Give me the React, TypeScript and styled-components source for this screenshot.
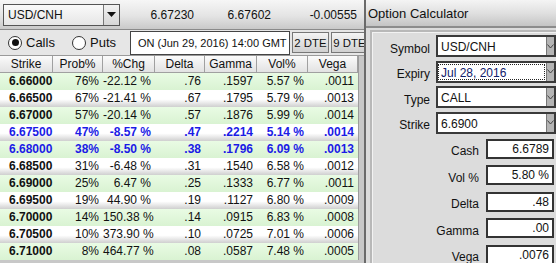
import React from 'react';
import styled, {createGlobalStyle} from "styled-components";

const GlobalStyle = createGlobalStyle`
    body {
        margin: 0;
        font-family: 'Liberation Sans', Arial, sans-serif;
        background: #d4d4d4;
    }
`;

const Screen = styled.div`
    display: flex;
    width: 556px;
    height: 263px;
    overflow: hidden;
    font-size: 12px;
    color: #111;
`;

const LeftPanel = styled.div`
    display: flex;
    flex-direction: column;
    width: 364px;
    flex-shrink: 0;
    background: #c8c8c8;
    overflow: hidden;
`;

const TopBar = styled.div`
    display: grid;
    grid-template-columns: 117px 74px 77px 86px;
    align-items: center;
    height: 30px;
    box-sizing: border-box;
    padding-left: 3px;
    background: linear-gradient(#f6f6f6, #e4e4e4 55%, #c9c9c9);
    border-bottom: 1px solid #8a8a8a;
`;

const Combo = styled.div`
    display: flex;
    height: 22px;
    box-sizing: border-box;
    border: 1px solid #555;
    background: linear-gradient(#fafafa, #e6e6e6);
    font-size: 12px;
`;

const ComboText = styled.span`
    flex: 1;
    padding: 3px 0 0 4px;
`;

const ComboButton = styled.span`
    display: flex;
    align-items: center;
    justify-content: center;
    width: 15px;
    border-left: 1px solid #777;
    background: linear-gradient(#f2f2f2, #d6d6d6);
`;

const Quote = styled.span`
    text-align: right;
    font-size: 12px;
`;

const ControlRow = styled.div`
    display: flex;
    align-items: center;
    height: 26px;
    padding-left: 8px;
    background: #e6e6e6;
    border-bottom: 1px solid #9a9a9a;
    box-sizing: border-box;
    overflow: hidden;
`;

const RadioLabel = styled.label<{ $width: number }>`
    display: flex;
    align-items: center;
    gap: 4px;
    flex-shrink: 0;
    width: ${p => p.$width}px;
    font-size: 13px;
`;

const RadioDot = styled.span<{ $on: boolean }>`
    position: relative;
    width: 12px;
    height: 12px;
    border-radius: 50%;
    border: 1px solid #333;
    background: #fff;

    &::after {
        content: '';
        display: ${p => p.$on ? 'block' : 'none'};
        position: absolute;
        left: 2.5px;
        top: 2.5px;
        width: 7px;
        height: 7px;
        border-radius: 50%;
        background: #111;
    }
`;

const ExpiryBox = styled.div`
    display: flex;
    align-items: center;
    flex-shrink: 0;
    width: 160px;
    height: 24px;
    box-sizing: border-box;
    padding-left: 7px;
    background: #fff;
    border: 1px solid #444;
    font-size: 11px;
    white-space: nowrap;
`;

const DteButton = styled.button`
    flex-shrink: 0;
    width: 37px;
    height: 21px;
    padding: 0;
    margin-left: 2px;
    font-family: inherit;
    font-size: 11.4px;
    color: #111;
    white-space: nowrap;
    background: linear-gradient(#f4f4f4, #d0d0d0);
    border: 1px solid #777;
    border-radius: 0;
`;

const TableArea = styled.div`
    display: flex;
`;

const Grid = styled.div`
    display: grid;
    grid-template-columns: 53px 50px 52px 50px 52px 51px 50px;
    flex-shrink: 0;
    border-right: 1px solid #9c9c9c;
`;

const HeadCell = styled.div`
    height: 17px;
    line-height: 17px;
    text-align: center;
    font-size: 12px;
    background: linear-gradient(#fbfbfb, #e2e2e2);
    border-right: 1px solid #a0a0a0;
    border-bottom: 1px solid #a0a0a0;
    box-sizing: border-box;
`;

const Cell = styled.div<{ $odd: boolean; $blue: boolean; $strike?: boolean }>`
    height: 17px;
    line-height: 17px;
    padding: 0 ${p => p.$strike ? '0 0 9px' : '4px 0 0'};
    text-align: ${p => p.$strike ? 'left' : 'right'};
    font-size: 12px;
    font-weight: ${p => (p.$strike || p.$blue) ? 700 : 400};
    color: ${p => p.$blue ? '#1b1be6' : '#111'};
    white-space: nowrap;
    background: ${p => p.$odd
            ? 'linear-gradient(#e9fbe4, #d9f3d2)'
            : 'linear-gradient(#ffffff 55%, #cfcfcf)'};
`;

const Divider = styled.div`
    width: 2px;
    flex-shrink: 0;
    background: #6a6a6a;
`;

const RightPanel = styled.div`
    display: flex;
    flex-direction: column;
    flex: 1;
    background: #dcdcdc;
`;

const TitleBar = styled.div`
    height: 28px;
    line-height: 28px;
    padding-left: 2px;
    font-size: 13px;
    white-space: nowrap;
    background: linear-gradient(#f4f4f4, #e0e0e0 50%, #c4c4c4);
    border-bottom: 2px solid #8c8c8c;
    box-sizing: border-box;
`;

const InnerBox = styled.div`
    flex: 1;
    margin: 2px 0 0 4px;
    padding: 3px 0 0 0;
    border-left: 2px solid #b8b8b8;
    border-top: 2px solid #b8b8b8;
    box-shadow: inset 1px 1px 0 #f2f2f2;
`;

const SelectForm = styled.div`
    display: grid;
    grid-template-columns: 58px 1fr;
    column-gap: 6px;
    row-gap: 3.5px;
    align-items: center;
`;

const FieldLabel = styled.span`
    text-align: right;
    font-size: 12px;
    padding-top: 5px;
    white-space: nowrap;
`;

const Select = styled.div`
    display: flex;
    height: 22px;
    box-sizing: border-box;
    border: 2px solid #3a3a3a;
    border-right: none;
    background: #fff;
`;

const SelectText = styled.span<{ $focus?: boolean }>`
    flex: 1;
    margin: 1px 1px 1px 0;
    padding: 1px 0 0 2px;
    font-size: 12px;
    color: ${p => p.$focus ? '#10206a' : '#111'};
    border: 1px dotted ${p => p.$focus ? '#222' : 'transparent'};
    white-space: nowrap;
`;

const SelectButton = styled.span`
    display: flex;
    align-items: center;
    justify-content: center;
    width: 7px;
    border-left: 1px solid #777;
    border-right: 2px solid #3a3a3a;
    background: #b4b4b4;
`;

const ValueForm = styled.div`
    display: grid;
    grid-template-columns: 107px 68px;
    column-gap: 7px;
    row-gap: 6.5px;
    align-items: center;
    margin-top: 5px;
`;

const ValueBox = styled.div`
    height: 20px;
    line-height: 16px;
    box-sizing: border-box;
    padding-right: 3px;
    text-align: right;
    font-size: 12px;
    background: #fff;
    border: 2px solid #333;
`;

type Row = [string, string, string, string, string, string, string];

const rows: Row[] = [
  ['6.66000', '76%', '-22.12 %', '.76', '.1597', '5.57 %', '.0011'],
  ['6.66500', '67%', '-21.41 %', '.67', '.1795', '5.79 %', '.0013'],
  ['6.67000', '57%', '-20.14 %', '.57', '.1876', '5.99 %', '.0014'],
  ['6.67500', '47%', '-8.57 %', '.47', '.2214', '5.14 %', '.0014'],
  ['6.68000', '38%', '-8.50 %', '.38', '.1796', '6.09 %', '.0013'],
  ['6.68500', '31%', '-6.48 %', '.31', '.1540', '6.58 %', '.0012'],
  ['6.69000', '25%', '6.47 %', '.25', '.1333', '6.77 %', '.0011'],
  ['6.69500', '19%', '44.90 %', '.19', '.1127', '6.80 %', '.0009'],
  ['6.70000', '14%', '150.38 %', '.14', '.0915', '6.83 %', '.0008'],
  ['6.70500', '10%', '373.90 %', '.10', '.0725', '7.01 %', '.0006'],
  ['6.71000', '8%', '464.77 %', '.08', '.0587', '7.48 %', '.0005'],
];

const headers = ['Strike', 'Prob%', '%Chg', 'Delta', 'Gamma', 'Vol%', 'Vega'];

const Caret = () => (
  <svg width="9" height="5" viewBox="0 0 9 5">
    <path d="M0 0h9L4.5 5z" fill="#111"/>
  </svg>
);

const SmallCaret = () => (
  <svg width="7" height="5" viewBox="0 0 7 5">
    <path d="M0.5 0.5L3.5 4L6.5 0.5" fill="none" stroke="#444" strokeWidth="1"/>
  </svg>
);

const selects = [
  {label: 'Symbol', value: 'USD/CNH'},
  {label: 'Expiry', value: 'Jul 28, 2016', focus: true},
  {label: 'Type', value: 'CALL'},
  {label: 'Strike', value: '6.6900'},
];

const values = [
  ['Cash', '6.6789'],
  ['Vol %', '5.80 %'],
  ['Delta', '.48'],
  ['Gamma', '.00'],
  ['Vega', '.0076'],
];

const App = () => {
  return (
    <Screen>
      <GlobalStyle/>
      <LeftPanel>
        <TopBar>
          <Combo>
            <ComboText>USD/CNH</ComboText>
            <ComboButton><Caret/></ComboButton>
          </Combo>
          <Quote>6.67230</Quote>
          <Quote>6.67602</Quote>
          <Quote>-0.00555</Quote>
        </TopBar>

        <ControlRow>
          <RadioLabel $width={64}>
            <RadioDot $on={true}/>Calls
          </RadioLabel>
          <RadioLabel $width={58}>
            <RadioDot $on={false}/>Puts
          </RadioLabel>
          <ExpiryBox>ON (Jun 29, 2016) 14:00 GMT</ExpiryBox>
          <DteButton>2 DTE</DteButton>
          <DteButton>9 DTE</DteButton>
        </ControlRow>

        <TableArea>
          <Grid>
            {headers.map(h => <HeadCell key={h}>{h}</HeadCell>)}
            {rows.map((row, i) => {
              const odd = i % 2 === 0;
              const blue = i === 3 || i === 4;
              return row.map((v, j) => (
                <Cell key={`${i}-${j}`} $odd={odd} $blue={blue} $strike={j === 0}>{v}</Cell>
              ));
            })}
          </Grid>
        </TableArea>
      </LeftPanel>

      <Divider/>

      <RightPanel>
        <TitleBar>Option Calculator</TitleBar>
        <InnerBox>
          <SelectForm>
            {selects.map(s => (
              <React.Fragment key={s.label}>
                <FieldLabel>{s.label}</FieldLabel>
                <Select>
                  <SelectText $focus={s.focus}>{s.value}</SelectText>
                  <SelectButton><SmallCaret/></SelectButton>
                </Select>
              </React.Fragment>
            ))}
          </SelectForm>
          <ValueForm>
            {values.map(([label, value]) => (
              <React.Fragment key={label}>
                <FieldLabel>{label}</FieldLabel>
                <ValueBox>{value}</ValueBox>
              </React.Fragment>
            ))}
          </ValueForm>
        </InnerBox>
      </RightPanel>
    </Screen>
  );
};

export default App;
